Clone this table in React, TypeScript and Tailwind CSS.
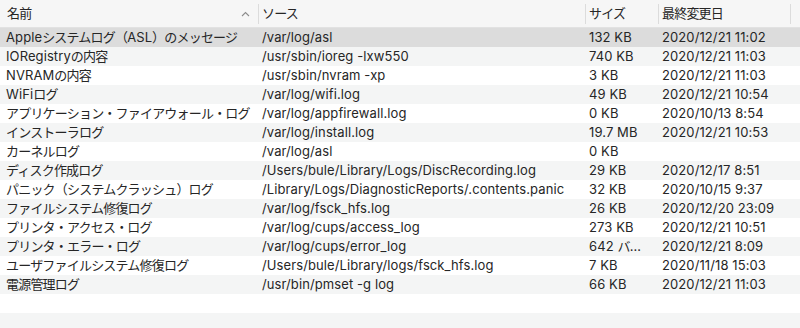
import React from 'react';

type Row = { name: string; source: string; size: string; date: string };

const rows: Row[] = [
  { name: 'Appleシステムログ（ASL）のメッセージ', source: '/var/log/asl', size: '132 KB', date: '2020/12/21 11:02' },
  { name: 'IORegistryの内容', source: '/usr/sbin/ioreg -lxw550', size: '740 KB', date: '2020/12/21 11:03' },
  { name: 'NVRAMの内容', source: '/usr/sbin/nvram -xp', size: '3 KB', date: '2020/12/21 11:03' },
  { name: 'WiFiログ', source: '/var/log/wifi.log', size: '49 KB', date: '2020/12/21 10:54' },
  { name: 'アプリケーション・ファイアウォール・ログ', source: '/var/log/appfirewall.log', size: '0 KB', date: '2020/10/13 8:54' },
  { name: 'インストーラログ', source: '/var/log/install.log', size: '19.7 MB', date: '2020/12/21 10:53' },
  { name: 'カーネルログ', source: '/var/log/asl', size: '0 KB', date: '' },
  { name: 'ディスク作成ログ', source: '/Users/bule/Library/Logs/DiscRecording.log', size: '29 KB', date: '2020/12/17 8:51' },
  { name: 'パニック（システムクラッシュ）ログ', source: '/Library/Logs/DiagnosticReports/.contents.panic', size: '32 KB', date: '2020/10/15 9:37' },
  { name: 'ファイルシステム修復ログ', source: '/var/log/fsck_hfs.log', size: '26 KB', date: '2020/12/20 23:09' },
  { name: 'プリンタ・アクセス・ログ', source: '/var/log/cups/access_log', size: '273 KB', date: '2020/12/21 10:51' },
  { name: 'プリンタ・エラー・ログ', source: '/var/log/cups/error_log', size: '642 バ…', date: '2020/12/21 8:09' },
  { name: 'ユーザファイルシステム修復ログ', source: '/Users/bule/Library/logs/fsck_hfs.log', size: '7 KB', date: '2020/11/18 15:03' },
  { name: '電源管理ログ', source: '/usr/bin/pmset -g log', size: '66 KB', date: '2020/12/21 11:03' },
];

const cols = 'grid grid-cols-[258px_327px_73px_132px_1fr]';

// 日本語部分だけ字間を詰める（ラテン文字はそのまま）
const Mixed: React.FC<{ text: string }> = ({ text }) => (
  <>
    {text.split(/([\x20-\x7e]+)/).filter(Boolean).map((part, i) =>
      /^[\x20-\x7e]+$/.test(part) ? (
        <span key={i}>{part}</span>
      ) : (
        <span key={i} className="tracking-[-0.8px]">{part}</span>
      )
    )}
  </>
);

const Divider = () => <div className="absolute left-0 top-[4px] h-[20px] w-px bg-[#dcdcdc]" />;

const App: React.FC = () => {
  const filler = [0, 1];

  return (
    <div
      className="w-[800px] h-[328px] overflow-hidden bg-white text-[13px] text-[#262626] tracking-[0.1px]"
      style={{ fontFamily: 'Inter, "Noto Sans CJK JP", sans-serif' }}
    >
      {/* ヘッダー */}
      <div className={`${cols} h-[28px] bg-[#f6f6f6] border-b border-[#e2e2e2]`}>
        <div className="relative flex items-center justify-between pl-[7px] pr-[8px]">
          <Mixed text="名前" />
          <svg width="9" height="6" viewBox="0 0 9 6" className="mt-[1px]">
            <path d="M1 5 L4.5 1.5 L8 5" fill="none" stroke="#8c8c8c" strokeWidth="1.1" />
          </svg>
        </div>
        <div className="relative flex items-center pl-[4px]">
          <Divider />
          <Mixed text="ソース" />
        </div>
        <div className="relative flex items-center pl-[4px]">
          <Divider />
          <Mixed text="サイズ" />
        </div>
        <div className="relative flex items-center pl-[4px]">
          <Divider />
          <Mixed text="最終変更日" />
        </div>
        <div className="relative">
          <Divider />
        </div>
      </div>

      {/* 行 */}
      {rows.map((r, i) => (
        <div
          key={i}
          className={`${cols} h-[19px] items-center leading-[19px] ${
            i === 0 ? 'bg-[#dcdcdc]' : i % 2 === 1 ? 'bg-[#f4f5f5]' : 'bg-white'
          }`}
        >
          <div className="pl-[6px] whitespace-nowrap overflow-hidden">
            <Mixed text={r.name} />
          </div>
          <div className="pl-[4px] whitespace-nowrap overflow-hidden">{r.source}</div>
          <div className="pl-[4px] whitespace-nowrap overflow-hidden">
            <Mixed text={r.size} />
          </div>
          <div className="pl-[4px] whitespace-nowrap overflow-hidden">{r.date}</div>
          <div />
        </div>
      ))}
      {filler.map((f) => (
        <div key={f} className={`h-[19px] ${f % 2 === 0 ? 'bg-white' : 'bg-[#f4f5f5]'}`} />
      ))}
    </div>
  );
};

export default App;
